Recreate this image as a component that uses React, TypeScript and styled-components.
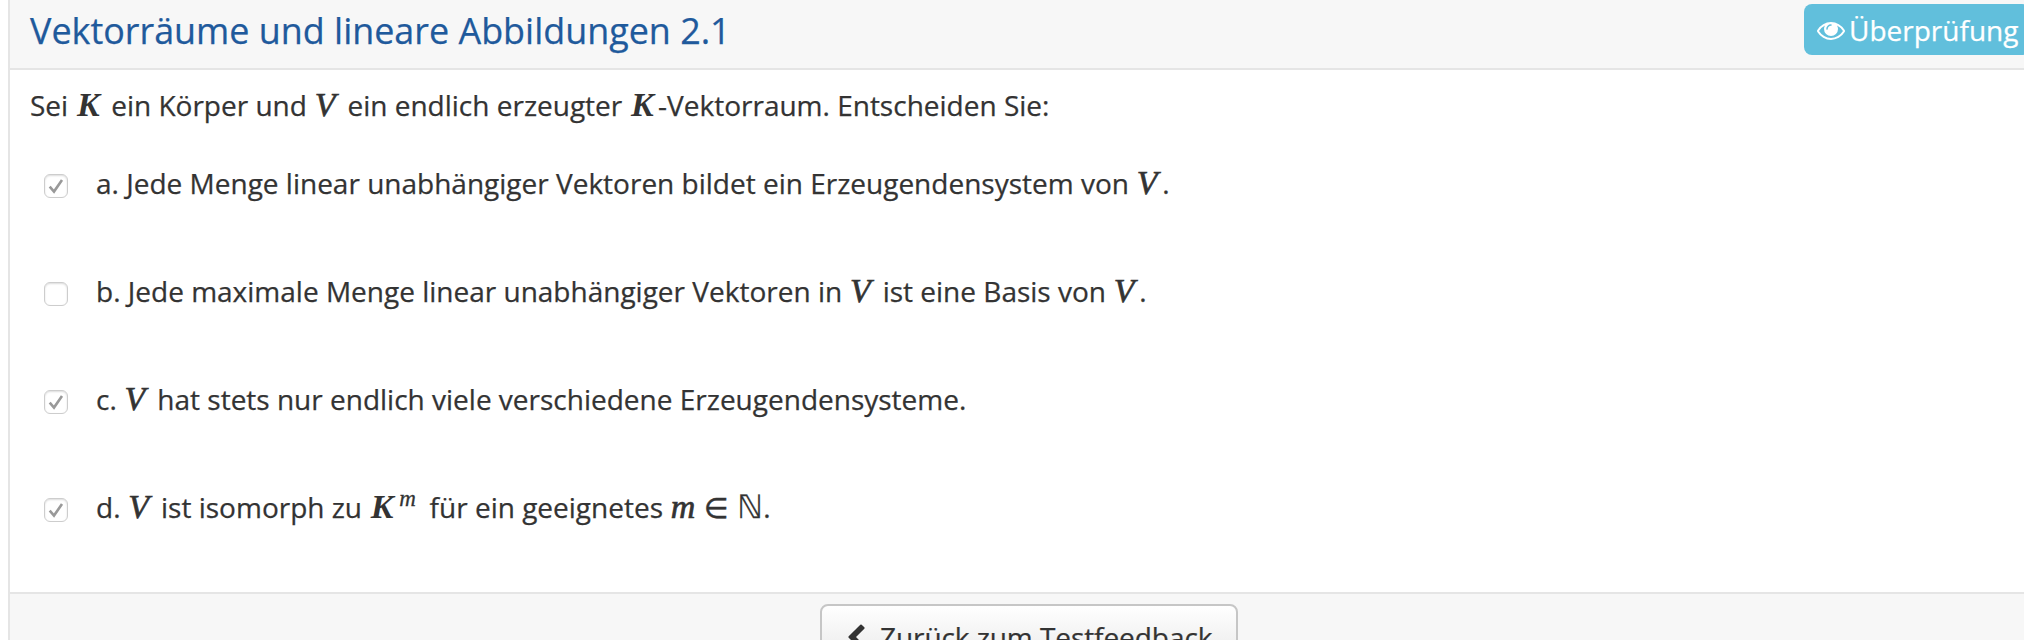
import React from 'react';
import styled, { createGlobalStyle } from 'styled-components';

const Global = createGlobalStyle`
  * { box-sizing: border-box; }
  html, body { margin: 0; height: 640px; overflow: hidden; background: #fff; }
  body {
    font-family: 'Open Sans', 'Noto Sans', sans-serif;
    font-size: 28px;
    line-height: 40px;
    color: #333;
    -webkit-text-stroke: 0.25px currentColor;
  }
`;

const Page = styled.div`
  width: 2024px;
  height: 640px;
  padding-left: 8px;
  overflow: hidden;
`;

const Panel = styled.section`
  display: flex;
  flex-direction: column;
  width: 2030px;
  height: 700px;
  border-left: 2px solid #e5e5e5;
`;

const Header = styled.header`
  display: flex;
  align-items: flex-start;
  justify-content: space-between;
  flex: 0 0 70px;
  padding: 0 8px 0 20px;
  background: #f7f7f7;
  border-bottom: 2px solid #e5e5e5;
`;

const Title = styled.h3`
  margin: 0;
  font-size: 35.9px;
  font-weight: 400;
  line-height: 62px;
  color: #1f5a9c;
  white-space: nowrap;
`;

const ReviewButton = styled.button`
  display: flex;
  align-items: center;
  gap: 4px;
  width: 226px;
  height: 51px;
  margin-top: 4px;
  padding: 0 0 0 13px;
  border: 0;
  border-radius: 8px;
  background: #61bfdc;
  color: #fff;
  font: inherit;
`;

const Glyph = styled.svg`
  flex: none;
  width: 28px;
  height: 28px;
  fill: currentColor;
`;

const Body = styled.div`
  flex: 0 0 522px;
  min-height: 0;
  padding: 15px 20px 0;
  white-space: nowrap;
`;

const Question = styled.p`
  margin: 0 0 38px;
`;

const Answers = styled.ul`
  margin: 0;
  padding: 0 0 0 14px;
  list-style: none;
`;

const Answer = styled.li`
  display: flex;
  align-items: flex-start;
  gap: 28px;
  height: 108px;

  &:last-child { height: 100px; }
`;

const Box = styled.span`
  display: flex;
  flex: none;
  width: 24px;
  height: 24px;
  margin-top: 11px;
  border: 1px solid #cdcdcd;
  border-radius: 6px;
  background: #fff;
  box-shadow: inset 0 1px 2px rgba(0, 0, 0, 0.14);
`;

const Tick = styled.svg`
  width: 22px;
  height: 22px;
  fill: none;
  stroke: #999;
  stroke-width: 2.6;
`;

const MathVar = styled.i<{ $w: number; $bold?: boolean }>`
  display: inline-block;
  width: ${(p) => p.$w}px;
  font-family: 'Liberation Serif', serif;
  font-size: 34px;
  line-height: 1px;
  font-weight: ${(p) => (p.$bold ? 700 : 400)};
  text-indent: ${(p) => (p.$bold ? 1.5 : 0.5)}px;
  -webkit-text-stroke: ${(p) => (p.$bold ? 0 : 0.7)}px currentColor;
`;

const Exponent = styled(MathVar)`
  font-size: 23px;
  text-indent: 1.5px;
  vertical-align: 12px;
  -webkit-text-stroke-width: 0.3px;
`;

const Element = styled.span`
  display: inline-block;
  width: 42px;
  text-align: center;
  font-family: 'DejaVu Sans', sans-serif;
  line-height: 1px;
  -webkit-text-stroke-width: 0.5px;
`;

const Naturals = styled.span`
  display: inline-block;
  width: 26px;
  font-family: 'DejaVu Sans', sans-serif;
  font-size: 32px;
  line-height: 1px;
`;

const Footer = styled.footer`
  display: flex;
  align-items: flex-start;
  flex: 1;
  padding: 10px 0 0 810px;
  background: #f7f7f7;
  border-top: 2px solid #e5e5e5;
`;

const BackButton = styled.button`
  display: flex;
  align-items: flex-start;
  gap: 10px;
  width: 418px;
  height: 68px;
  padding: 11px 0 0 20px;
  border: 2px solid #c6c6c6;
  border-radius: 8px;
  background: linear-gradient(#fff, #e6e6e6);
  color: #333;
  font: inherit;
  letter-spacing: -0.07px;
  text-shadow: 0 2px 2px rgba(255, 255, 255, 0.75);
  white-space: nowrap;

  ${Glyph} { margin-top: 7px; }
`;

const V = () => <MathVar $w={26}>V</MathVar>;
const K = () => <MathVar $w={28.5} $bold>K</MathVar>;

const answers: { checked: boolean; text: React.ReactNode }[] = [
  { checked: true, text: <>a. Jede Menge linear unabhängiger Vektoren bildet ein Erzeugendensystem von <V />.</> },
  { checked: false, text: <>b. Jede maximale Menge linear unabhängiger Vektoren in <V /> ist eine Basis von <V />.</> },
  { checked: true, text: <>c. <V /> hat stets nur endlich viele verschiedene Erzeugendensysteme.</> },
  {
    checked: true,
    text: (
      <>
        d. <V /> ist isomorph zu <K /><Exponent $w={24.5}>m</Exponent> für ein geeignetes{' '}
        <MathVar $w={25}>m</MathVar><Element>∈</Element><Naturals>ℕ</Naturals>.
      </>
    ),
  },
];

export default function App() {
  return (
    <Page>
      <Global />
      <Panel>
        <Header>
          <Title>Vektorräume und lineare Abbildungen 2.1</Title>
          <ReviewButton>
            <Glyph viewBox="0 0 1792 1792">
              <path d="M1664 960q-152-236-381-353 61 104 61 225 0 185-131.500 316.500t-316.500 131.500-316.500-131.500-131.500-316.500q0-121 61-225-229 117-381 353 133 205 333.500 326.500t434.500 121.500 434.500-121.500 333.500-326.500zm-720-384q0-20-14-34t-34-14q-125 0-214.500 89.500t-89.500 214.500q0 20 14 34t34 14 34-14 14-34q0-86 61-147t147-61q20 0 34-14t14-34zm848 384q0 34-20 69-140 230-376.500 368.500t-499.500 138.500-499.500-139-376.500-368q-20-35-20-69t20-69q140-229 376.500-368t499.500-139 499.500 139 376.500 368q20 35 20 69z" />
            </Glyph>
            Überprüfung
          </ReviewButton>
        </Header>
        <Body>
          <Question>
            Sei <K /> ein Körper und <V /> ein endlich erzeugter <K />-Vektorraum. Entscheiden Sie:
          </Question>
          <Answers>
            {answers.map((a, i) => (
              <Answer key={i}>
                <Box>
                  {a.checked && (
                    <Tick viewBox="0 0 22 22">
                      <path d="M4.700 11.600L9 16.600 17 5" />
                    </Tick>
                  )}
                </Box>
                <span>{a.text}</span>
              </Answer>
            ))}
          </Answers>
        </Body>
        <Footer>
          <BackButton>
            <Glyph viewBox="0 0 1792 1792">
              <path d="M1427 301l-531 531 531 531q19 19 19 45t-19 45l-166 166q-19 19-45 19t-45-19l-742-742q-19-19-19-45t19-45l742-742q19-19 45-19t45 19l166 166q19 19 19 45t-19 45z" />
            </Glyph>
            Zurück zum Testfeedback
          </BackButton>
        </Footer>
      </Panel>
    </Page>
  );
}
